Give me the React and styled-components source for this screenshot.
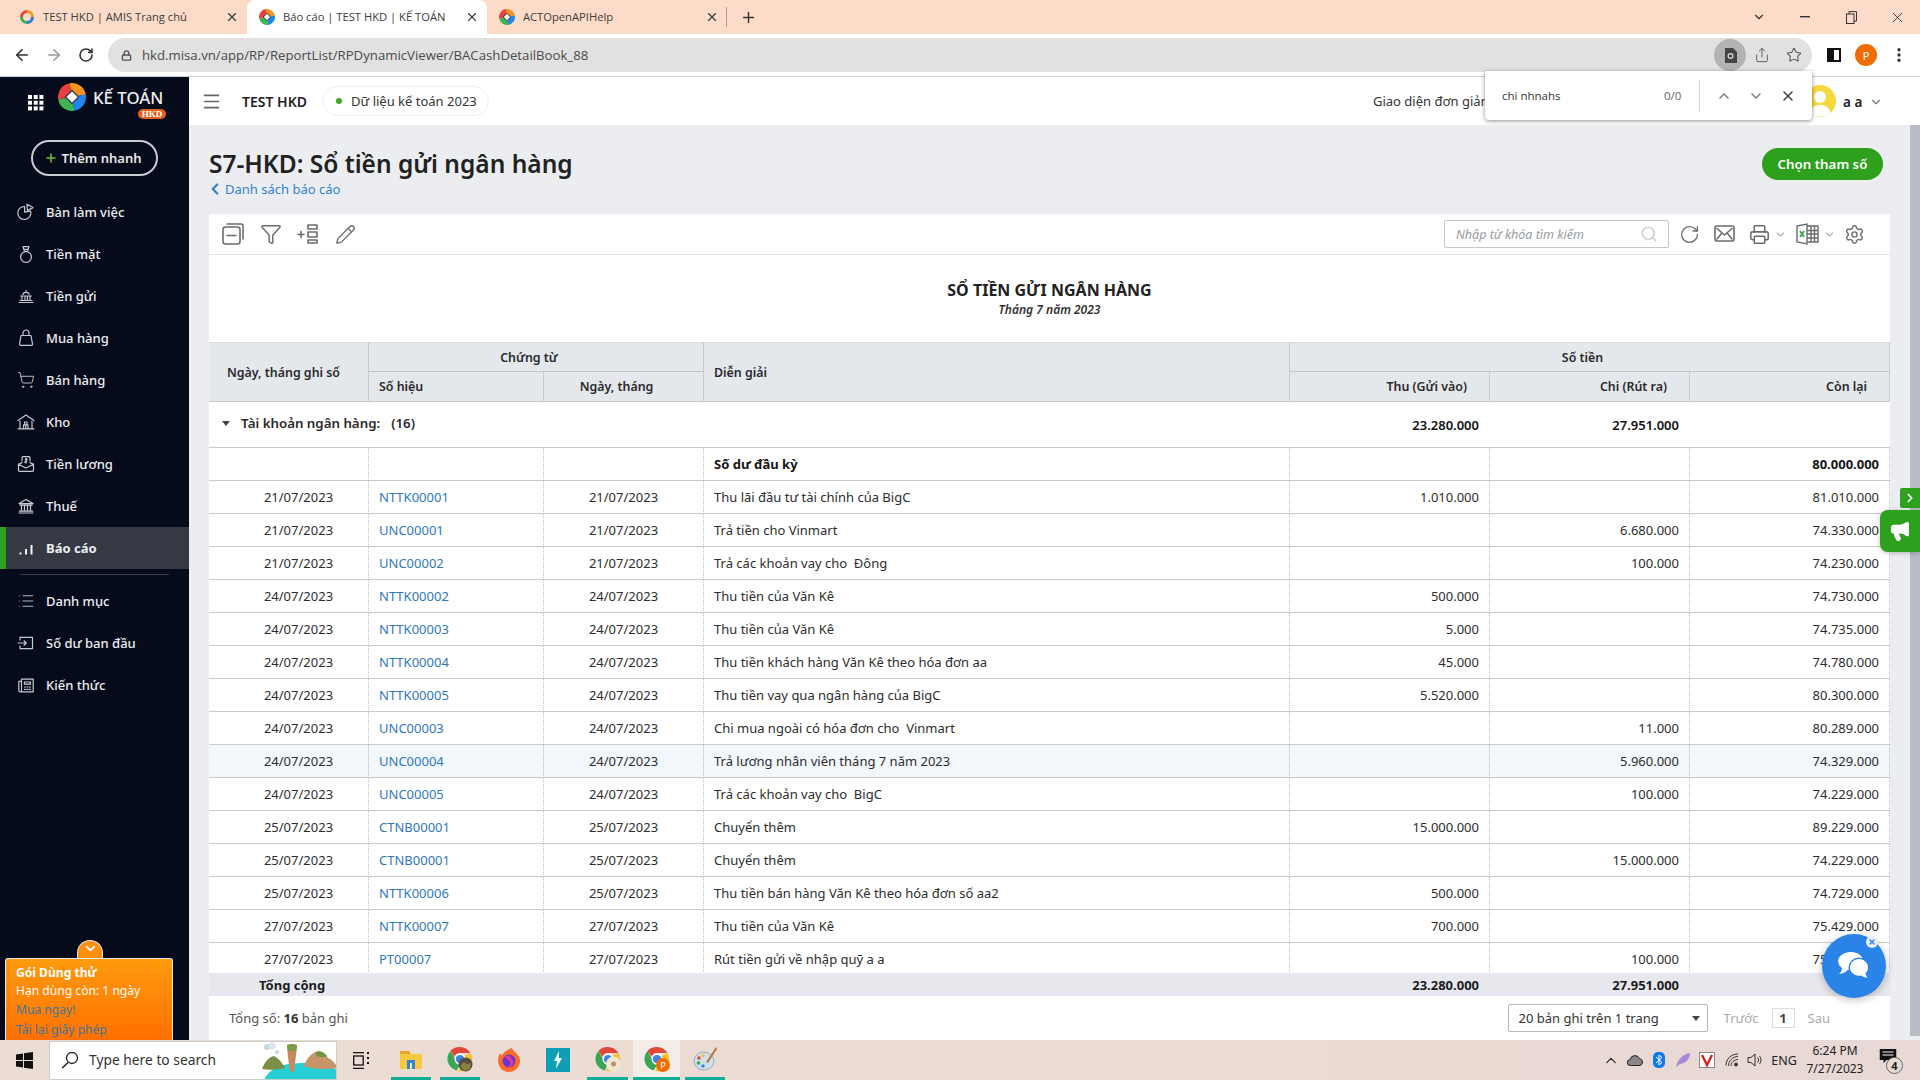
import React from 'react'
import styled, { createGlobalStyle } from 'styled-components'
import {
  ArrowLeft, ArrowRight, ChevronDown, ChevronLeft, ChevronRight, ChevronUp, Filter, List, Lock,
  Megaphone, Menu, Pencil, Plus, Printer, RotateCw, Search, Settings, Share,
  ShoppingCart, Star, X, EllipsisVertical,
} from 'lucide-react'

const GlobalStyle = createGlobalStyle`
html, body { margin: 0; padding: 0; background: #fff; }
* { box-sizing: border-box; }
body { font-family: "Noto Sans", "Open Sans", sans-serif; color: #212121; }
`

const Page = styled.div`
position: relative;
width: 1920px;
height: 1080px;
overflow: hidden;
display: flex;
flex-direction: column;
`

/* browser chrome */
const TabStrip = styled.div`
height: 34px;
background: #fcdbc9;
display: flex;
padding-left: 7px;
align-items: stretch;
`
const Tab = styled.div`
width: 240px;
display: flex;
align-items: center;
padding: 0 8px 0 12px;
gap: 8px;
font-size: 11.2px;
color: #3c3c3c;
border-radius: 8px 8px 0 0;
background: ${p => (p.$active ? '#fff' : 'transparent')};
`
const TabTitle = styled.span`
flex: 1;
white-space: nowrap;
overflow: hidden;
font-family: "Open Sans", sans-serif;
margin-top: -1px;
`
const TabDivider = styled.div`
width: 1px;
height: 20px;
margin: 7px 0 0 -1px;
background: #a99;
`
const NewTab = styled.div`
width: 42px;
display: flex;
align-items: center;
justify-content: center;
color: #333;
`
const WindowControls = styled.div`
margin-left: auto;
display: flex;
align-items: center;
color: #333;
`
const WindowButton = styled.div`
width: 46px;
height: 28px;
display: flex;
align-items: center;
justify-content: center;
`
const BrowserBar = styled.div`
height: 43px;
background: #fff;
border-bottom: 1px solid #cfcfcf;
display: flex;
align-items: flex-start;
padding: 4px 4px 0 6px;
`
const NavButton = styled.div`
width: 32px;
height: 34px;
margin-left: ${p => p.$gap || 0}px;
display: flex;
align-items: center;
justify-content: center;
color: ${p => (p.$off ? '#9a9a9a' : '#333')};
`
const AddressBar = styled.div`
width: 1704px;
height: 34px;
margin-left: 6px;
border-radius: 17px;
background: #e1e1e1;
display: flex;
align-items: center;
padding: 0 2px 0 13px;
color: #555;
`
const Url = styled.span`
margin-left: 10px;
font-size: 13.2px;
font-family: "Open Sans", sans-serif;
color: #4a4a4a;
flex: 1;
`
const AddressAction = styled.div`
width: 32px;
height: 32px;
border-radius: 50%;
display: flex;
align-items: center;
justify-content: center;
background: ${p => (p.$on ? '#b3b3b3' : 'transparent')};
color: #5a5a5a;
`
const ProfileDot = styled.div`
width: 22px;
height: 22px;
border-radius: 50%;
background: #ef6c00;
color: #fff;
font-size: 11px;
display: flex;
align-items: center;
justify-content: center;
`
const SidePanelIcon = styled.div`
width: 14px;
height: 14px;
border: 2px solid #111;
border-left-width: 7px;
`

/* find popup */
const FindBar = styled.div`
position: absolute;
left: 1485px;
top: 71px;
width: 327px;
height: 49px;
background: #fff;
border-radius: 0 0 4px 4px;
box-shadow: 0 1px 4px rgba(0, 0, 0, .45);
display: flex;
align-items: center;
padding-left: 17px;
font-size: 11.5px;
font-family: "Open Sans", sans-serif;
z-index: 5;
`
const FindText = styled.span`
width: 162px;
color: #333;
`
const FindCount = styled.span`
width: 35px;
color: #666;
`
const FindSep = styled.div`
width: 1px;
height: 32px;
background: #d8d8d8;
margin-right: 8px;
`
const FindButton = styled.div`
width: 32px;
display: flex;
justify-content: center;
color: ${p => (p.$dark ? '#444' : '#777')};
`

/* app */
const AppArea = styled.div`
flex: 1;
display: flex;
min-height: 0;
`
const Sidebar = styled.aside`
position: relative;
width: 189px;
background: #060b1c;
color: #fff;
flex-shrink: 0;
`
const Brand = styled.div`
height: 48px;
display: flex;
align-items: center;
padding: 4px 0 0 28px;
position: relative;
`
const BrandName = styled.span`
position: absolute;
left: 93px;
top: 9px;
font-size: 16.8px;
font-weight: 500;
white-space: nowrap;
color: #eee;
`
const BrandBadge = styled.span`
position: absolute;
left: 138px;
top: 32px;
width: 28px;
height: 10px;
border-radius: 5px;
background: #e4601c;
color: #fff;
font-family: "Liberation Serif", serif;
font-weight: 700;
font-size: 9px;
line-height: 10px;
text-align: center;
`
const LogoHolder = styled.span`
position: absolute;
left: 58px;
top: 6px;
line-height: 0;
`
const QuickAdd = styled.button`
position: absolute;
left: 31px;
top: 63px;
width: 127px;
height: 36px;
border: 2px solid #c7ccd1;
border-radius: 18px;
background: transparent;
color: #e8e8e8;
font-family: inherit;
font-size: 13px;
font-weight: 600;
display: flex;
align-items: center;
justify-content: center;
gap: 4px;
padding: 0 4px 0 0;
svg { color: #69c22f; }
`
const SideNav = styled.nav`
position: absolute;
left: 0;
right: 0;
top: 114px;
`
const SideItem = styled.div`
height: 42px;
display: flex;
align-items: center;
padding-left: ${p => (p.$active ? '11px' : '17px')};
gap: 11px;
font-size: 13px;
font-weight: ${p => (p.$active ? 700 : 500)};
background: ${p => (p.$active ? '#343944' : 'transparent')};
border-left: ${p => (p.$active ? '6px solid #2da01d' : 'none')};
color: #eceef0;
svg { flex-shrink: 0; color: #c5c9cf; }
`
const SideDivider = styled.div`
height: 1px;
margin: 5px 20px;
background: #3a3f4b;
`
const TrialToggle = styled.div`
position: absolute;
left: 77px;
top: 863px;
width: 26px;
height: 19px;
background: #ff8f0c;
border-radius: 13px 13px 0 0;
border: 1px solid #e9e9e9;
border-bottom: none;
display: flex;
justify-content: center;
color: #fff;
`
const TrialBox = styled.div`
position: absolute;
left: 5px;
top: 881px;
width: 168px;
height: 82px;
border: 1px solid #e8e8e8;
border-bottom: none;
border-radius: 3px 3px 0 0;
background: linear-gradient(#ff9b0e, #ff7000);
padding: 5px 10px;
font-size: 12.1px;
line-height: 20px;
color: #fff;
white-space: nowrap;
`
const TrialTitle = styled.div`
font-weight: 700;
line-height: 18px;
`
const TrialLine = styled.div`
line-height: 17px;
margin-bottom: 1px;
`
const TrialLink = styled.div`
color: #40769f;
`

const Main = styled.main`
flex: 1;
min-width: 0;
display: flex;
flex-direction: column;
`
const AppHeader = styled.header`
height: 48px;
background: #fff;
display: flex;
align-items: center;
padding-left: 12px;
position: relative;
flex-shrink: 0;
svg { color: #666; }
`
const CompanyName = styled.span`
margin-left: 20px;
width: 80px;
font-size: 14px;
font-weight: 600;
color: #222;
`
const YearPill = styled.div`
height: 30px;
width: 167px;
border: 1px solid #eee;
border-radius: 15px;
display: flex;
align-items: center;
gap: 9px;
padding-left: 13px;
font-size: 13px;
color: #333;
white-space: nowrap;
`
const GreenDot = styled.i`
width: 6px;
height: 6px;
border-radius: 50%;
background: #43a52f;
`
const SimpleMode = styled.span`
position: absolute;
left: 1184px;
top: 15px;
font-size: 13px;
color: #333;
white-space: nowrap;
`
const Avatar = styled.div`
position: absolute;
left: 1615px;
top: 8px;
width: 32px;
height: 32px;
border-radius: 50%;
overflow: hidden;
line-height: 0;
`
const UserName = styled.div`
position: absolute;
left: 1654px;
top: 16px;
font-size: 13.5px;
font-weight: 600;
display: flex;
align-items: center;
gap: 7px;
svg { color: #777; }
`

const Content = styled.div`
flex: 1;
position: relative;
min-height: 0;
background: #ebedf1;
padding-left: 20px;
`
const ScrollThumb = styled.div`
position: absolute;
right: 0;
top: 0;
width: 10px;
height: 911px;
background: #b8bcc7;
`
const TitleBlock = styled.div`
height: 89px;
padding-top: 21px;
`
const PageTitle = styled.h1`
margin: 0;
font-size: 24.5px;
font-weight: 600;
line-height: 36px;
color: #212121;
`
const BackLink = styled.div`
display: flex;
align-items: center;
margin: -2px 0 0 -3px;
gap: 1px;
font-size: 13px;
line-height: 18px;
color: #3482c9;
`
const ChooseParams = styled.button`
position: absolute;
left: 1573px;
top: 23px;
width: 121px;
height: 32px;
border: none;
border-radius: 16px;
background: #2da01d;
color: #fff;
font-family: inherit;
font-size: 13.3px;
font-weight: 600;
padding: 0;
`
const Panel = styled.section`
width: 1681px;
height: 826px;
background: #fff;
display: flex;
flex-direction: column;
`
const PanelToolbar = styled.div`
height: 41px;
flex-shrink: 0;
border-bottom: 1px solid #e4e4e4;
display: flex;
align-items: center;
padding: 0 25px 0 13px;
color: #6a6c70;
`
const ToolIcon = styled.div`
width: 37.5px;
display: flex;
line-height: 0;
`
const ToolRight = styled.div`
margin-left: auto;
display: flex;
align-items: center;
`
const SearchInput = styled.div`
width: 225px;
height: 28px;
border: 1px solid #c4c8ce;
border-radius: 2px;
display: flex;
align-items: center;
justify-content: space-between;
padding: 0 10px 0 11px;
margin-right: 10px;
font-size: 12.5px;
font-style: italic;
color: #979aa0;
svg { color: #c2c4c8; }
`
const RightTool = styled.div`
display: flex;
align-items: center;
gap: ${p => p.$inner || 4}px;
margin-left: ${p => p.$gap || 0}px;
line-height: 0;
svg + svg { color: #a9adb3; }
`
const ReportHead = styled.div`
height: 87px;
flex-shrink: 0;
text-align: center;
padding-top: 23px;
`
const ReportName = styled.div`
font-size: 16px;
font-weight: 700;
line-height: 24px;
color: #222;
`
const ReportPeriod = styled.div`
font-size: 12px;
font-weight: 600;
font-style: italic;
line-height: 16px;
color: #333;
`
const TableClip = styled.div`
height: 631px;
overflow: hidden;
flex-shrink: 0;
`
const Table = styled.table`
table-layout: fixed;
width: 1681px;
border-collapse: separate;
border-spacing: 0;
font-size: 13px;
`
const Th = styled.th`
height: ${p => (p.rowSpan === 2 ? 60 : 30)}px;
background: #e4e7ec;
font-size: 12.4px;
font-weight: 600;
color: #2a2a2a;
border-right: 1px solid #c9cccf;
border-top: ${p => (p.$top ? '1px solid #dcdee2' : 'none')};
border-bottom: 1px solid #c4c7ca;
padding: ${p => p.$pad || '0 10px'};
text-align: ${p => p.$align || 'left'};
white-space: nowrap;
`
const GroupCell = styled.td`
height: 46px;
border-bottom: 1px solid #cacaca;
padding: ${p => (p.$align ? '0 11px 0 0' : '0 10px 3px 0')};
font-weight: 600;
text-align: ${p => p.$align || 'left'};
color: ${p => (p.$align ? '#111' : '#2a2a2a')};
white-space: nowrap;
`
const GroupLabel = styled.div`
display: flex;
align-items: center;
padding-left: 13px;
gap: 11px;
font-size: 13.3px;
`
const Caret = styled.i`
width: 0;
height: 0;
border-left: 4px solid transparent;
border-right: 4px solid transparent;
border-top: 5px solid #444;
`
const Td = styled.td`
height: 33px;
border-bottom: 1px solid #cacaca;
border-right: 1px dotted #bdbdbd;
padding: ${p => p.$pad || '0 10px'};
text-align: ${p => p.$align || 'left'};
font-weight: ${p => (p.$bold ? 700 : 400)};
color: ${p => (p.$link ? '#2f78bd' : p.$bold ? '#151515' : '#2d2d2d')};
white-space: pre;
overflow: hidden;
`
const Row = styled.tr`
background: ${p => (p.$hot ? '#f2f7fc' : '#fff')};
`
const TotalBar = styled.div`
height: 23px;
flex-shrink: 0;
background: #e7e8ed;
display: grid;
grid-template-columns: 1081px 200px 200px 200px;
align-items: center;
font-size: 13px;
font-weight: 700;
color: #1c1c1c;
`
const TotalLabel = styled.span`
padding-left: 50px;
`
const TotalValue = styled.span`
text-align: right;
padding-right: 11px;
`
const Pager = styled.div`
flex: 1;
display: flex;
align-items: center;
padding-left: 20px;
font-size: 13px;
color: #555;
`
const PagerCount = styled.span`
b { color: #333; font-weight: 700; }
`
const PageSize = styled.div`
margin-left: auto;
width: 200px;
height: 28px;
border: 1px solid #b5b7ba;
border-radius: 2px;
display: flex;
align-items: center;
justify-content: space-between;
padding: 0 7px 0 10px;
color: #333;
`
const PageNav = styled.span`
color: #aaa;
margin: ${p => p.$margin};
`
const PageCurrent = styled.span`
width: 23px;
height: 20px;
border: 1px solid #ddd;
display: flex;
align-items: center;
justify-content: center;
font-weight: 700;
color: #444;
`

/* floating widgets */
const SideTab = styled.div`
position: absolute;
left: 1900px;
top: 488px;
width: 20px;
height: 20px;
border-radius: 2px 0 0 2px;
background: #2da01d;
color: #fff;
display: flex;
align-items: center;
justify-content: center;
`
const Announce = styled.div`
position: absolute;
left: 1880px;
top: 510px;
width: 40px;
height: 42px;
border-radius: 8px 0 0 8px;
background: #2da01d;
box-shadow: 0 1px 5px rgba(0, 0, 0, .25);
color: #fff;
display: flex;
align-items: center;
justify-content: center;
`
const ChatBubble = styled.div`
position: absolute;
left: 1822px;
top: 934px;
width: 64px;
height: 64px;
border-radius: 50%;
background: #2a84e8;
box-shadow: 0 2px 8px rgba(0, 0, 0, .25);
display: flex;
align-items: center;
justify-content: center;
`
const ChatClose = styled.div`
position: absolute;
left: 44px;
top: 2px;
width: 12px;
height: 12px;
border-radius: 50%;
background: #e8eef5;
color: #2a84e8;
display: flex;
align-items: center;
justify-content: center;
`

/* windows taskbar */
const Taskbar = styled.footer`
position: relative;
height: 40px;
flex-shrink: 0;
background: linear-gradient(90deg, #ebddd3, #eadcd3 60%, #e8d8d6);
display: flex;
`
const StartButton = styled.div`
width: 49px;
display: flex;
align-items: center;
justify-content: center;
`
const TaskSearch = styled.div`
position: relative;
width: 288px;
height: 39px;
margin-top: 1px;
background: #fff;
border: 1px solid #ccc;
display: flex;
align-items: center;
padding: 0 0 2px 11px;
gap: 10px;
font-size: 13.8px;
color: #333;
overflow: hidden;
svg { flex-shrink: 0; }
`
const SearchArt = styled.span`
position: absolute;
right: 0;
top: 0;
line-height: 0;
`
const TaskIcon = styled.div`
position: absolute;
left: ${p => p.$x}px;
top: 0;
width: ${p => p.$w || 40}px;
height: 40px;
display: flex;
align-items: center;
justify-content: center;
background: ${p => (p.$active ? 'rgba(255,255,255,.45)' : 'transparent')};
border-bottom: ${p => (p.$running ? '3px solid #12ad97' : 'none')};
`
const TrayIcon = styled.div`
position: absolute;
left: ${p => p.$x}px;
top: ${p => p.$lift ? -3 : 0}px;
height: 40px;
display: flex;
align-items: center;
justify-content: center;
transform: translateX(-50%);
font-size: 12.5px;
color: #222;
white-space: nowrap;
`
const Clock = styled.div`
position: absolute;
left: 1805px;
top: 2px;
width: 60px;
text-align: center;
font-size: 12px;
line-height: 18px;
color: #222;
white-space: nowrap;
`
const NotifyBadge = styled.span`
position: absolute;
left: 1886px;
top: 17px;
width: 17px;
height: 17px;
border: 1px solid #666;
border-radius: 50%;
background: #e8dcd6;
font-size: 11px;
font-weight: 700;
line-height: 15px;
text-align: center;
`

/* drawings */
const Diamond = ({ size = 28 }) => (
  <svg width={size} height={size} viewBox="0 0 28 28">
    <path d="M14 14L11.570.21A14 14 0 0 1 27.790 11.570z" fill="#f7941d" />
    <path d="M14 14L27.790 11.570A14 14 0 0 1 16.430 27.790z" fill="#1e86f0" />
    <path d="M14 14L16.430 27.790A14 14 0 0 1 .210 16.430z" fill="#3fb551" />
    <path d="M14 14L.210 16.430A14 14 0 0 1 11.570.210z" fill="#ea3f3f" />
    <polygon points="14,6.500 21.500,14 14,21.500 6.500,14" fill="#3a3d45" />
    <polygon points="14,8.500 19.500,14 14,19.500 8.500,14" fill="#fff" />
  </svg>
)
const AmisRing = () => (
  <svg width="16" height="16" viewBox="0 0 16 16" fill="none" strokeWidth="3">
    <path d="M8 2.500a5.500 5.500 0 0 1 5.500 5.500" stroke="#f7941d" />
    <path d="M13.500 8A5.500 5.500 0 0 1 8 13.500" stroke="#2c7be5" />
    <path d="M8 13.500A5.500 5.500 0 0 1 2.500 8" stroke="#43b04a" />
    <path d="M2.500 8A5.500 5.500 0 0 1 8 2.500" stroke="#e8473c" />
  </svg>
)
const ChromeLogo = ({ badge }) => (
  <svg width="26" height="26" viewBox="0 0 26 26">
    <path d="M13 1a12 12 0 0 1 10.400 6H13a6 6 0 0 0-5.600 3.800L3.400 5A12 12 0 0 1 13 1z" fill="#e0493a" />
    <path d="M3.400 5l5 8.600a5 5 0 0 0 4.600 5.400L9.600 24.500A12 12 0 0 1 3.400 5z" fill="#3aa655" />
    <path d="M23.400 7A12 12 0 0 1 11 24.900L16.600 17a5.500 5.500 0 0 0 .4-7z" fill="#f6c026" />
    <circle cx="13" cy="13" r="4.800" fill="#3f83ea" stroke="#fff" strokeWidth="1.400" />
    {badge === 'p' && <circle cx="19" cy="19" r="7" fill="#ef6c00" />}
    {badge === 'p' && <text x="19" y="22.500" fontSize="9" fill="#fff" textAnchor="middle" fontFamily="Noto Sans">P</text>}
    {badge === 'pic' && <circle cx="18.500" cy="18.500" r="7" fill="#52503f" />}
    {badge === 'pic' && <path d="M13 20l4-4 3 2 4-1-1 6-6 2z" fill="#8a7f3f" />}
    {badge === 'flower' && <circle cx="18.500" cy="18" r="7.500" fill="#efe7d2" />}
    {badge === 'flower' && <circle cx="18.500" cy="18" r="2.500" fill="#c58d6b" />}
  </svg>
)
const WinLogo = () => (
  <svg width="17" height="17" viewBox="0 0 17 17" fill="#111">
    <path d="M0 2.400l7-1v6.600H0zM8 1.200L17 0v8H8zM0 9h7v6.600l-7-1zM8 9h9v8l-9-1.200z" />
  </svg>
)
const SideIcon = ({ children }) => (
  <svg width="18" height="18" viewBox="0 0 18 18" fill="none" stroke="currentColor" strokeWidth="1.200" strokeLinecap="round" strokeLinejoin="round">
    {children}
  </svg>
)
const ToolIconSvg = ({ children, w = 22 }) => (
  <svg width={w} height="22" viewBox={`0 0 ${w} 22`} fill="none" stroke="currentColor" strokeWidth="1.600" strokeLinecap="round" strokeLinejoin="round">
    {children}
  </svg>
)
const navIcons = {
  desk: <SideIcon><path d="M13.500 8.200A6.500 6.500 0 1 1 7.600 3.500v5.600z" /><path d="M10 1.200l6 3.400-5.600 3z" /></SideIcon>,
  cash: <SideIcon><circle cx="9" cy="12" r="5.400" /><path d="M6 1.600h6L10.500 6.400h-3zM6.600 4.400h4.800" /></SideIcon>,
  bank: <SideIcon><path d="M2 15.500h14M3 13.500h12M3.500 9h11M5 9.500v3.500M8 9.500v3.500M10.500 9.500v3.500M13 9.500v3.500M6 7.500a3 2.200 0 0 1 6 0M9 3.400v2" /></SideIcon>,
  buy: <SideIcon><path d="M4 6.500h10l1.500 8.500c.1.700-.4 1.300-1 1.300H3.500c-.6 0-1.100-.6-1-1.300z" /><path d="M6 6.500V4a3 3 0 0 1 6 0v2.500" /></SideIcon>,
  sell: <ShoppingCart size={18} strokeWidth={1.200} />,
  store: <SideIcon><path d="M1 7.500L9 2l8 5.500M3 15.500V8M15 15.500V8M1 15.800h16M6.500 15.500v-3.600h2.200v3.600M8.800 15.500v-3.600H11v3.600M7.600 11.800V9h2.400v2.800" /></SideIcon>,
  salary: <SideIcon><path d="M5 6V2.600c0-.6.4-1 1-1h6c.6 0 1 .4 1 1V6" /><path d="M1.500 9.200v6.100c0 .6.4 1 1 1h13c.6 0 1-.4 1-1V9.200L9 13z" /><path d="M1.500 9.200L5 7.600M16.500 9.200L13 7.600M10.400 4.200C9 3.400 7.500 4.500 9 5.500c1.600 1 0 2.200-1.400 1.400M9 3v5.200" /></SideIcon>,
  tax: <SideIcon><path d="M2 6.600L9 2.400l7 4.200zM3 8.200h12M4.500 8.500v5.400M7.500 8.500v5.400M10.500 8.500v5.400M13.500 8.500v5.400M2.400 14.200h13.200M2 16h14" /></SideIcon>,
  report: <SideIcon><path d="M3.500 15.500v-2M9 15.500V10M14.500 15.500V6" strokeWidth="2" strokeLinecap="butt" stroke="#f2f2f2" /></SideIcon>,
  list: <List size={18} strokeWidth={1.200} />,
  open: <SideIcon><path d="M3 6V3.400h12.500v11.200H3V12M1 9h8M7 6.800L9.300 9 7 11.200" /></SideIcon>,
  know: <SideIcon><path d="M4.500 3.200h11.700v12.600H3.400c-1 0-1.600-.6-1.600-1.600V5.400h2.700zM4.500 3.200v12.200M7.400 6h6v2.200h-6zM7.600 11h1M10 11h1M12.400 11h1M7.600 13.400h1M10 13.400h1M12.400 13.400h1" /></SideIcon>,
}
const navTop = [
  ['desk', 'Bàn làm việc'], ['cash', 'Tiền mặt'], ['bank', 'Tiền gửi'], ['buy', 'Mua hàng'],
  ['sell', 'Bán hàng'], ['store', 'Kho'], ['salary', 'Tiền lương'], ['tax', 'Thuế'],
]
const navBottom = [['list', 'Danh mục'], ['open', 'Số dư ban đầu'], ['know', 'Kiến thức']]

const rows = [
  ['21/07/2023', 'NTTK00001', 'Thu lãi đầu tư tài chính của BigC', '1.010.000', '', '81.010.000'],
  ['21/07/2023', 'UNC00001', 'Trả tiền cho Vinmart', '', '6.680.000', '74.330.000'],
  ['21/07/2023', 'UNC00002', 'Trả các khoản vay cho  Đông', '', '100.000', '74.230.000'],
  ['24/07/2023', 'NTTK00002', 'Thu tiền của Văn Kê', '500.000', '', '74.730.000'],
  ['24/07/2023', 'NTTK00003', 'Thu tiền của Văn Kê', '5.000', '', '74.735.000'],
  ['24/07/2023', 'NTTK00004', 'Thu tiền khách hàng Văn Kê theo hóa đơn aa', '45.000', '', '74.780.000'],
  ['24/07/2023', 'NTTK00005', 'Thu tiền vay qua ngân hàng của BigC', '5.520.000', '', '80.300.000'],
  ['24/07/2023', 'UNC00003', 'Chi mua ngoài có hóa đơn cho  Vinmart', '', '11.000', '80.289.000'],
  ['24/07/2023', 'UNC00004', 'Trả lương nhân viên tháng 7 năm 2023', '', '5.960.000', '74.329.000'],
  ['24/07/2023', 'UNC00005', 'Trả các khoản vay cho  BigC', '', '100.000', '74.229.000'],
  ['25/07/2023', 'CTNB00001', 'Chuyển thêm', '15.000.000', '', '89.229.000'],
  ['25/07/2023', 'CTNB00001', 'Chuyển thêm', '', '15.000.000', '74.229.000'],
  ['25/07/2023', 'NTTK00006', 'Thu tiền bán hàng Văn Kê theo hóa đơn số aa2', '500.000', '', '74.729.000'],
  ['27/07/2023', 'NTTK00007', 'Thu tiền của Văn Kê', '700.000', '', '75.429.000'],
  ['27/07/2023', 'PT00007', 'Rút tiền gửi về nhập quỹ a a', '', '100.000', '75.329.000'],
]

const App = () => {
  return (
    <Page>
      <GlobalStyle />
      <TabStrip>
        <Tab><AmisRing /><TabTitle>TEST HKD | AMIS Trang chủ</TabTitle><X size={14} /></Tab>
        <Tab $active><Diamond size={16} /><TabTitle>Báo cáo | TEST HKD | KẾ TOÁN</TabTitle><X size={14} /></Tab>
        <Tab><Diamond size={16} /><TabTitle>ACTOpenAPIHelp</TabTitle><X size={14} /></Tab>
        <TabDivider />
        <NewTab><Plus size={17} /></NewTab>
        <WindowControls>
          <WindowButton><ChevronDown size={14} /></WindowButton>
          <WindowButton><svg width="10" height="2"><rect width="10" height="1.400" fill="#333" /></svg></WindowButton>
          <WindowButton>
            <svg width="11" height="13" viewBox="0 0 11 13" fill="none" stroke="#333"><rect x=".5" y="3" width="7.500" height="9.500" /><path d="M3 3V.6h7.500v9.500H8" /></svg>
          </WindowButton>
          <WindowButton><X size={17} strokeWidth={1.300} /></WindowButton>
        </WindowControls>
      </TabStrip>
      <BrowserBar>
        <NavButton><ArrowLeft size={18} strokeWidth={2.200} /></NavButton>
        <NavButton $off><ArrowRight size={18} strokeWidth={2.200} /></NavButton>
        <NavButton><RotateCw size={16} strokeWidth={2.400} /></NavButton>
        <AddressBar>
          <Lock size={11} strokeWidth={3} />
          <Url>hkd.misa.vn/app/RP/ReportList/RPDynamicViewer/BACashDetailBook_88</Url>
          <AddressAction $on>
            <svg width="13" height="15" viewBox="0 0 13 15"><path d="M1 0h8l4 4v11H1z" fill="#444" /><circle cx="6.500" cy="8" r="2.400" fill="none" stroke="#ddd" strokeWidth="1.200" /></svg>
          </AddressAction>
          <AddressAction><Share size={16} strokeWidth={1.400} /></AddressAction>
          <AddressAction><Star size={16} strokeWidth={1.600} /></AddressAction>
        </AddressBar>
        <NavButton $gap={6}><SidePanelIcon /></NavButton>
        <NavButton><ProfileDot>P</ProfileDot></NavButton>
        <NavButton $gap={1}><EllipsisVertical size={18} strokeWidth={2.400} /></NavButton>
      </BrowserBar>
      <FindBar>
        <FindText>chi nhnahs</FindText>
        <FindCount>0/0</FindCount>
        <FindSep />
        <FindButton><ChevronUp size={16} /></FindButton>
        <FindButton><ChevronDown size={16} /></FindButton>
        <FindButton $dark><X size={16} strokeWidth={2.400} /></FindButton>
      </FindBar>

      <AppArea>
        <Sidebar>
          <Brand>
            <svg width="16" height="16" viewBox="0 0 16 16" fill="#fff">
              {[0, 5.700, 11.400].map(x => [0, 5.700, 11.400].map(y => <rect key={`${x}-${y}`} x={x} y={y} width="4" height="4" />))}
            </svg>
            <LogoHolder><Diamond /></LogoHolder>
            <BrandName>KẾ TOÁN</BrandName>
            <BrandBadge>HKD</BrandBadge>
          </Brand>
          <QuickAdd><Plus size={14} strokeWidth={2.600} />Thêm nhanh</QuickAdd>
          <SideNav>
            {navTop.map(([key, label]) => (
              <SideItem key={key}>{navIcons[key]}{label}</SideItem>
            ))}
            <SideItem $active>{navIcons.report}Báo cáo</SideItem>
            <SideDivider />
            {navBottom.map(([key, label]) => (
              <SideItem key={key}>{navIcons[key]}{label}</SideItem>
            ))}
          </SideNav>
          <TrialToggle><ChevronDown size={15} strokeWidth={3} /></TrialToggle>
          <TrialBox>
            <TrialTitle>Gói Dùng thử</TrialTitle>
            <TrialLine>Hạn dùng còn: 1 ngày</TrialLine>
            <TrialLink>Mua ngay!</TrialLink>
            <TrialLink>Tải lại giấy phép</TrialLink>
          </TrialBox>
        </Sidebar>

        <Main>
          <AppHeader>
            <Menu size={21} strokeWidth={1.800} />
            <CompanyName>TEST HKD</CompanyName>
            <YearPill><GreenDot />Dữ liệu kế toán 2023</YearPill>
            <SimpleMode>Giao diện đơn giản</SimpleMode>
            <Avatar>
              <svg width="32" height="32" viewBox="0 0 32 32">
                <rect width="32" height="32" fill="#f5d93f" />
                <circle cx="16" cy="12" r="6" fill="#fff" />
                <path d="M5 30c1-8 6-10 11-10s10 2 11 10c-3 2-19 2-22 0z" fill="#fff" />
              </svg>
            </Avatar>
            <UserName>a a<ChevronDown size={14} /></UserName>
          </AppHeader>
          <Content>
            <ScrollThumb />
            <TitleBlock>
              <PageTitle>S7-HKD: Sổ tiền gửi ngân hàng</PageTitle>
              <BackLink><ChevronLeft size={18} strokeWidth={3} />Danh sách báo cáo</BackLink>
            </TitleBlock>
            <ChooseParams>Chọn tham số</ChooseParams>
            <Panel>
              <PanelToolbar>
                <ToolIcon>
                  <ToolIconSvg><rect x="1" y="4" width="17" height="17" rx="2.500" /><path d="M5 12.500h9M5 1h14c1 0 2 1 2 2v13" /></ToolIconSvg>
                </ToolIcon>
                <ToolIcon><Filter size={22} strokeWidth={1.600} /></ToolIcon>
                <ToolIcon>
                  <ToolIconSvg><path d="M1 11.500h6M4 8.500v6" /><rect x="11" y="2" width="9" height="4" /><rect x="11" y="9" width="9" height="5" /><rect x="11" y="17" width="9" height="3" /></ToolIconSvg>
                </ToolIcon>
                <ToolIcon><Pencil size={21} strokeWidth={1.500} /></ToolIcon>
                <ToolRight>
                  <SearchInput>Nhập từ khóa tìm kiếm<Search size={18} strokeWidth={1.600} /></SearchInput>
                  <RightTool><RotateCw size={21} strokeWidth={1.500} /></RightTool>
                  <RightTool $gap={14}>
                    <ToolIconSvg w={21}><rect x="1" y="3" width="19" height="15" rx="1.500" /><path d="M3 5.500l7.500 6.500L18 5.500M3 16l5-6M18 16l-5-6" /></ToolIconSvg>
                  </RightTool>
                  <RightTool $gap={14}><Printer size={21} strokeWidth={1.800} /><ChevronDown size={13} strokeWidth={2} /></RightTool>
                  <RightTool $gap={9}>
                    <svg width="23" height="22" viewBox="0 0 23 22" fill="none" stroke="#6a6c70" strokeWidth="1.400">
                      <path d="M1 3l10-2v20L1 19zM11 3h11v16H11M15 3v16M18.500 3v16M11 7.500h11M11 11h11M11 15h11" />
                      <path d="M4 8l4 6M8 8l-4 6" stroke="#3aa655" strokeWidth="1.800" />
                    </svg>
                    <ChevronDown size={13} strokeWidth={2} />
                  </RightTool>
                  <RightTool $gap={8}><Settings size={21} strokeWidth={1.600} /></RightTool>
                </ToolRight>
              </PanelToolbar>
              <ReportHead>
                <ReportName>SỔ TIỀN GỬI NGÂN HÀNG</ReportName>
                <ReportPeriod>Tháng 7 năm 2023</ReportPeriod>
              </ReportHead>
              <TableClip>
                <Table>
                  <colgroup>
                    <col width="160" /><col width="175" /><col width="160" /><col width="586" />
                    <col width="200" /><col width="200" /><col width="200" />
                  </colgroup>
                  <thead>
                    <tr>
                      <Th rowSpan={2} $pad="0 0 0 18px" $top>Ngày, tháng ghi sổ</Th>
                      <Th colSpan={2} $align="center" $pad="0 14px 0 0" $top>Chứng từ</Th>
                      <Th rowSpan={2} $top>Diễn giải</Th>
                      <Th colSpan={3} $align="center" $pad="0 14px 0 0" $top>Số tiền</Th>
                    </tr>
                    <tr>
                      <Th $pad="0 0 0 10px">Số hiệu</Th>
                      <Th $align="center" $pad="0 14px 0 0">Ngày, tháng</Th>
                      <Th $align="right" $pad="0 22px 0 0">Thu (Gửi vào)</Th>
                      <Th $align="right" $pad="0 22px 0 0">Chi (Rút ra)</Th>
                      <Th $align="right" $pad="0 22px 0 0">Còn lại</Th>
                    </tr>
                  </thead>
                  <tbody>
                    <tr>
                      <GroupCell colSpan={4}><GroupLabel><Caret /><span>Tài khoản ngân hàng:</span><span>(16)</span></GroupLabel></GroupCell>
                      <GroupCell $align="right">23.280.000</GroupCell>
                      <GroupCell $align="right">27.951.000</GroupCell>
                      <GroupCell />
                    </tr>
                    <Row>
                      <Td /><Td /><Td />
                      <Td $bold>Số dư đầu kỳ</Td>
                      <Td /><Td />
                      <Td $bold $align="right">80.000.000</Td>
                    </Row>
                    {rows.map((r, i) => (
                      <Row key={i} $hot={r[1] === 'UNC00004'}>
                        <Td $align="center" $pad="0 0 0 20px">{r[0]}</Td>
                        <Td $link>{r[1]}</Td>
                        <Td $align="center">{r[0]}</Td>
                        <Td>{r[2]}</Td>
                        <Td $align="right">{r[3]}</Td>
                        <Td $align="right">{r[4]}</Td>
                        <Td $align="right">{r[5]}</Td>
                      </Row>
                    ))}
                  </tbody>
                </Table>
              </TableClip>
              <TotalBar>
                <TotalLabel>Tổng cộng</TotalLabel>
                <TotalValue>23.280.000</TotalValue>
                <TotalValue>27.951.000</TotalValue>
                <span />
              </TotalBar>
              <Pager>
                <PagerCount>Tổng số: <b>16</b> bản ghi</PagerCount>
                <PageSize>
                  20 bản ghi trên 1 trang
                  <Caret />
                </PageSize>
                <PageNav $margin="0 13px 0 16px">Trước</PageNav>
                <PageCurrent>1</PageCurrent>
                <PageNav $margin="0 60px 0 13px">Sau</PageNav>
              </Pager>
            </Panel>
          </Content>
        </Main>
      </AppArea>

      <SideTab><ChevronRight size={14} strokeWidth={3} /></SideTab>
      <Announce><Megaphone size={22} fill="#fff" strokeWidth={1.600} /></Announce>
      <ChatBubble>
        <ChatClose><X size={8} strokeWidth={4} /></ChatClose>
        <svg width="34" height="30" viewBox="0 0 34 30">
          <path d="M14 1c7 0 12 4 12 9s-5 9-12 9c-1 0-2 0-3-.2C9 21 6 23 2 23c2-1.600 3-3.500 3-6-2.500-1.700-3.800-4-3.800-7C1.200 5 7 1 14 1z" fill="#fff" />
          <circle cx="22" cy="17" r="10.500" fill="#2a84e8" />
          <path d="M22 8c5 0 9 3.600 9 8.500 0 2.300-.9 4.300-2.400 5.800 0 1.800.9 3.300 2.400 4.400-3 0-5.300-1-6.900-2.200-.7.200-1.400.2-2.100.2-5 0-9-3.600-9-8.200S17 8 22 8z" fill="#fff" />
        </svg>
      </ChatBubble>

      <Taskbar>
        <StartButton><WinLogo /></StartButton>
        <TaskSearch>
          <svg width="18" height="18" viewBox="0 0 18 18" fill="none" stroke="#222" strokeWidth="1.300"><circle cx="11" cy="7" r="5.500" /><path d="M7 11.500L1.200 17" strokeWidth="1.600" /></svg>
          Type here to search
          <SearchArt>
            <svg width="82" height="38" viewBox="0 0 82 38">
              <path d="M10 38C16 25 30 21 50 21s28 4 32 6v11z" fill="#26cfd5" />
              <path d="M8 27c3-8 7-12 12-13 4 2 8 6 11 12-7 2-16 2-23 1z" fill="#7b8f45" />
              <path d="M33 3c4-1.500 8-1 10 .5l-1 10 -2 16h-4l-2-14z" fill="#c68a5e" />
              <path d="M33 3c4-1.500 8-1 10 .5l-.5 5c-3 1-7 1-9-.5z" fill="#7d9a4a" />
              <path d="M50 24c3-9 9-14 15-15 4 1 7 3 9 7 3 1 6 4 8 7v3c-10 2-24 1-32-2z" fill="#c79468" />
              <path d="M62 10c3-1.500 7-.5 11 4-3 2-8 1-11-.5z" fill="#6f943f" />
              <circle cx="13" cy="5" r="3" fill="#c4d6e2" /><circle cx="18" cy="4" r="3.600" fill="#d8e4ec" /><circle cx="23" cy="10" r="2" fill="#c4d6e2" />
            </svg>
          </SearchArt>
        </TaskSearch>
        <TaskIcon $x={341}>
          <svg width="18" height="17" viewBox="0 0 18 17" fill="none" stroke="#111" strokeWidth="1.300"><path d="M1 .7h11M1 16.300h11" /><rect x="1.700" y="4" width="9.500" height="9" /><path d="M15 1h2M15 6h2M15 11h2" strokeWidth="2" /></svg>
        </TaskIcon>
        <TaskIcon $x={391} $running>
          <svg width="24" height="22" viewBox="0 0 24 22"><path d="M1 3h9l2 3h11v15H1z" fill="#f6c93f" /><path d="M1 3h9l2 3H1z" fill="#e5a82a" /><path d="M8 12h8v9H8z" fill="#2f86d9" /><path d="M11 15h2v6h-2z" fill="#f6e7a8" /></svg>
        </TaskIcon>
        <TaskIcon $x={440} $running><ChromeLogo badge="pic" /></TaskIcon>
        <TaskIcon $x={489}>
          <svg width="24" height="26" viewBox="0 0 24 26"><path d="M15 1c0 3 7 5 8 12 .6 6-4.500 12-11 12S1 20 1 13c0-3 1-5 2-7l2 3c1-4 5-6 10-8z" fill="#ff6b27" /><circle cx="12" cy="14" r="6.500" fill="#6a34d0" /><path d="M7 9c4-1 8 1 9 5s-2 7-6 6c3-1 4-3 3-5s-3-3-6-6z" fill="#e63a8f" /></svg>
        </TaskIcon>
        <TaskIcon $x={538}>
          <svg width="24" height="24" viewBox="0 0 24 24"><rect width="24" height="24" fill="#0f9fb5" /><path d="M13 3l-5 10h3l-1 8 6-11h-3z" fill="#e8f7fa" /></svg>
        </TaskIcon>
        <TaskIcon $x={587} $running $w={41}><ChromeLogo badge="flower" /></TaskIcon>
        <TaskIcon $x={633} $running $active $w={47}><ChromeLogo badge="p" /></TaskIcon>
        <TaskIcon $x={685} $running>
          <svg width="26" height="26" viewBox="0 0 26 26"><ellipse cx="12" cy="15" rx="10" ry="9" fill="#cfe0ea" stroke="#9ab" /><circle cx="7" cy="12" r="1.800" fill="#e6453a" /><circle cx="11" cy="9.500" r="1.800" fill="#f4c63a" /><circle cx="6.500" cy="17" r="1.800" fill="#3aa655" /><circle cx="11" cy="20" r="1.800" fill="#3f83ea" /><path d="M24 1l1 2-9 14-2-1z" fill="#b57a3e" /></svg>
        </TaskIcon>
        <TrayIcon $x={1611}><ChevronUp size={17} strokeWidth={1.600} /></TrayIcon>
        <TrayIcon $x={1635}>
          <svg width="17" height="11" viewBox="0 0 17 11" fill="#888" stroke="#222" strokeWidth="1"><path d="M4 10.500a3 3 0 0 1-.4-6 5 5 0 0 1 9.500-.8 3.500 3.500 0 0 1 .4 6.800z" /></svg>
        </TrayIcon>
        <TrayIcon $x={1659}>
          <svg width="12" height="16" viewBox="0 0 12 16"><rect width="12" height="16" rx="5" fill="#0a7cf0" /><path d="M3 5l6 5.500L6 13V3l3 2.500L3 11" fill="none" stroke="#fff" strokeWidth="1" /></svg>
        </TrayIcon>
        <TrayIcon $x={1683}>
          <svg width="16" height="16" viewBox="0 0 16 16"><path d="M1 15C3 7 8 2 15 1c0 6-4 10-10 11l-4 3z" fill="#a787d8" /></svg>
        </TrayIcon>
        <TrayIcon $x={1707}>
          <svg width="16" height="16" viewBox="0 0 16 16"><rect x=".5" y=".5" width="15" height="15" fill="#fff" stroke="#888" /><path d="M3 3l5 10 5-10" fill="none" stroke="#c8281e" strokeWidth="2.400" /></svg>
        </TrayIcon>
        <TrayIcon $x={1732}>
          <svg width="14" height="14" viewBox="0 0 14 14" fill="none" stroke="#333" strokeWidth="1"><path d="M1 12.500C1 6 6 1 13 1M3.500 13c0-5 4-9.500 9.500-9.500M6 13c0-3.500 3-6.500 7-6.500" /><circle cx="11" cy="11.500" r="1.500" fill="#333" /></svg>
        </TrayIcon>
        <TrayIcon $x={1755}>
          <svg width="16" height="14" viewBox="0 0 16 14" fill="none" stroke="#333" strokeWidth="1"><path d="M1 4.500h3L8 1v12L4 9.500H1zM10.500 4.500a3.500 3.500 0 0 1 0 5M12.500 3a6 6 0 0 1 0 8" /></svg>
        </TrayIcon>
        <TrayIcon $x={1784}>ENG</TrayIcon>
        <Clock>6:24 PM<br />7/27/2023</Clock>
        <TrayIcon $x={1888} $lift>
          <svg width="17" height="17" viewBox="0 0 17 17"><path d="M0 0h17v11H7l-3 3v-3H0z" fill="#111" /><path d="M3 3h11M3 6h11" stroke="#eee" /></svg>
        </TrayIcon>
        <NotifyBadge>4</NotifyBadge>
      </Taskbar>
    </Page>
  )
}
export default App
